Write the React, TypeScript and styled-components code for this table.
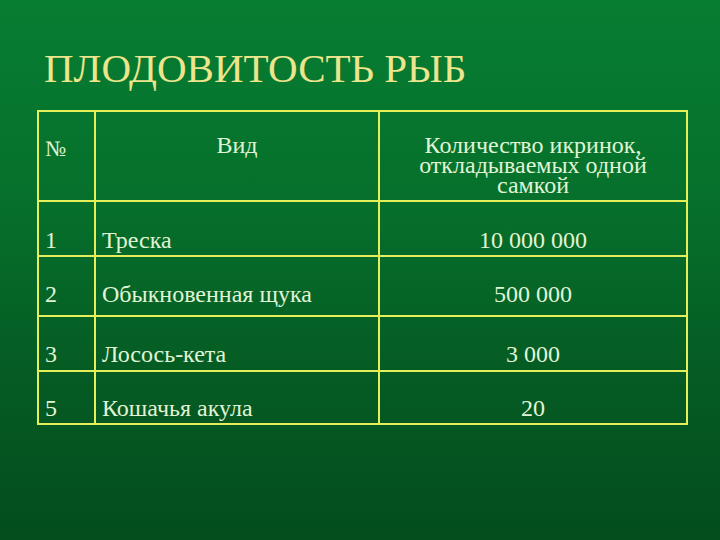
import React from 'react';
import styled, { createGlobalStyle } from 'styled-components';

const GlobalStyle = createGlobalStyle`
    html, body {
        margin: 0;
        padding: 0;
    }
`;

const Slide = styled.div`
    width: 720px;
    height: 540px;
    box-sizing: border-box;
    padding: 48px 0 0 37px;
    font-family: "Liberation Serif", "Times New Roman", serif;
    background: linear-gradient(180deg, #077d32 0%, #06712c 35%, #055b23 70%, #044d1d 100%);
    overflow: hidden;
`;

const Title = styled.h1`
    margin: 0 0 21px 7px;
    font-family: "Liberation Serif", "Times New Roman", serif;
    font-size: 41px;
    line-height: 41px;
    font-weight: normal;
    color: #ece58c;
    white-space: nowrap;
`;

const Table = styled.table`
    border-collapse: collapse;
    width: 649px;
    table-layout: fixed;
    color: #e0f4d6;
    font-family: "Liberation Serif", "Times New Roman", serif;
    font-size: 24px;
`;

const Row = styled.tr<{ h: number }>`
    height: ${({ h }) => h}px;
`;

const Cell = styled.td<{ align?: 'left' | 'center'; valign?: 'top' | 'bottom'; pb?: number }>`
    border: 2px solid #e4ef5a;
    padding: ${({ valign, pb }) => (valign === 'top' ? '23px 6px 0 6px' : `0 6px ${pb ?? 5}px 6px`)};
    text-align: ${({ align }) => align || 'left'};
    vertical-align: ${({ valign }) => valign || 'bottom'};
    line-height: 20px;
    box-sizing: border-box;
    white-space: nowrap;
`;

const NumSign = styled.span`
    display: inline-block;
    margin-top: 4px;
    font-size: 22px;
`;

const rows = [
    { n: '1', name: 'Треска', count: '10 000 000', h: 55, pb: 5 },
    { n: '2', name: 'Обыкновенная щука', count: '500 000', h: 60, pb: 11 },
    { n: '3', name: 'Лосось-кета', count: '3 000', h: 55, pb: 6 },
    { n: '5', name: 'Кошачья акула', count: '20', h: 53, pb: 5 },
];

const App = () => {
    return (
        <>
            <GlobalStyle />
            <Slide>
                <Title>ПЛОДОВИТОСТЬ РЫБ</Title>
                <Table>
                    <colgroup>
                        <col width={57} />
                        <col width={284} />
                        <col width={308} />
                    </colgroup>
                    <tbody>
                        <Row h={90}>
                            <Cell valign='top'><NumSign>№</NumSign></Cell>
                            <Cell valign='top' align='center'>Вид</Cell>
                            <Cell valign='top' align='center'>
                                Количество икринок,<br />откладываемых одной<br />самкой
                            </Cell>
                        </Row>
                        {rows.map((r) => (
                            <Row h={r.h} key={r.n}>
                                <Cell pb={r.pb}>{r.n}</Cell>
                                <Cell pb={r.pb}>{r.name}</Cell>
                                <Cell pb={r.pb} align='center'>{r.count}</Cell>
                            </Row>
                        ))}
                    </tbody>
                </Table>
            </Slide>
        </>
    );
};

export default App;
